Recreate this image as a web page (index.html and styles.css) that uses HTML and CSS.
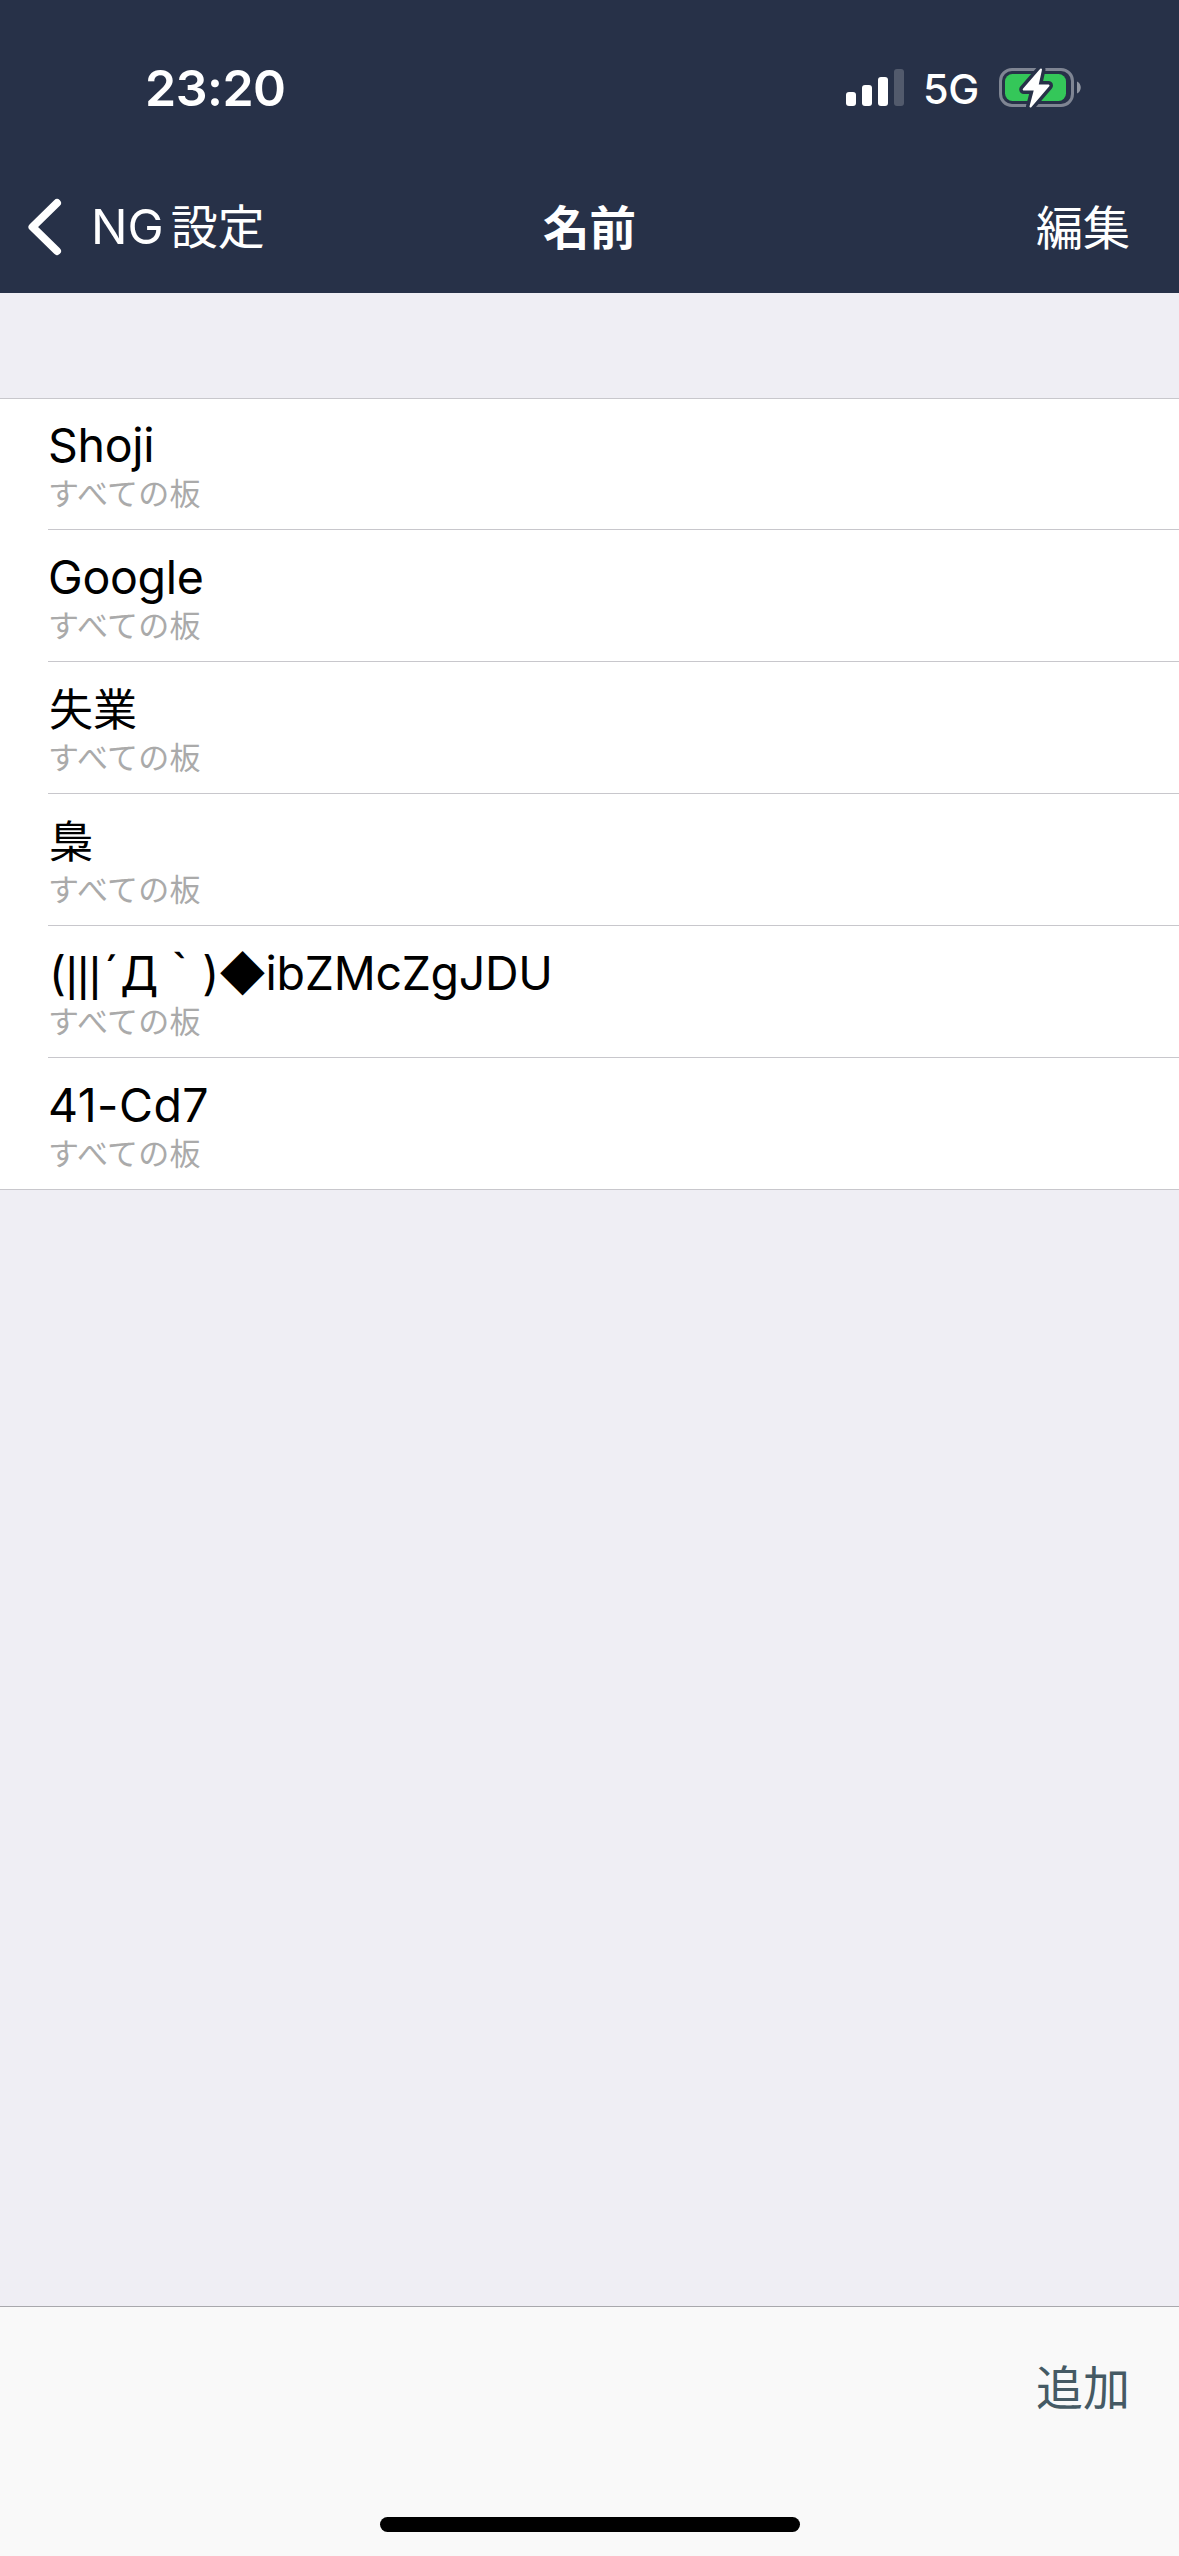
FILE: index.html
```html
<!DOCTYPE html>
<html lang="ja">
<head>
    <meta charset="UTF-8">
    <meta name="viewport" content="width=device-width, initial-scale=1.0">
    <title>名前</title>
    <link rel="stylesheet" href="styles.css">
</head>
<body>
    <header>
        <div class="status-bar">
            <div class="time">23:20</div>
            <div class="status-icons">
                <svg class="signal" width="58" height="37" viewBox="0 0 58 37" fill="#fff">
                    <rect x="0" y="23" width="10" height="14" rx="3"/>
                    <rect x="16" y="16" width="10" height="21" rx="3"/>
                    <rect x="32" y="8" width="10" height="29" rx="3"/>
                    <rect x="48" y="0" width="10" height="37" rx="3" opacity="0.2"/>
                </svg>
                <span class="network">5G</span>
                <svg class="battery" width="83" height="42" viewBox="0 0 83 42">
                    <rect x="1.5" y="2.5" width="72" height="36" rx="11.5" fill="none" stroke="#7f8593" stroke-width="3"/>
                    <path d="M78 14.5c5 2 5 10 0 12z" fill="#9196a2"/>
                    <rect x="6" y="7" width="61" height="27" rx="7.5" fill="#34c759"/>
                    <path class="bolt-edge" d="M42 2.5L24.7 22.5H36L31.5 39.5L49.5 18.5H38.5z"/>
                    <path class="bolt" d="M42 2.5L24.7 22.5H36L31.5 39.5L49.5 18.5H38.5z"/>
                </svg>
            </div>
        </div>
        <nav>
            <a class="back">
                <svg width="34" height="58" viewBox="0 0 34 58">
                    <path d="M29 5L4.5 29L29 53" fill="none" stroke="#fff" stroke-width="8" stroke-linecap="round" stroke-linejoin="round"/>
                </svg>
                <span class="back-label">NG<span class="kanji">設定</span></span>
            </a>
            <h1>名前</h1>
            <a class="edit">編集</a>
        </nav>
    </header>

    <main>
        <ul class="list">
            <li><div class="row"><p class="name">Shoji</p><p class="board">すべての板</p></div></li>
            <li><div class="row"><p class="name">Google</p><p class="board">すべての板</p></div></li>
            <li><div class="row"><p class="name ja">失業</p><p class="board">すべての板</p></div></li>
            <li><div class="row"><p class="name ja">梟</p><p class="board">すべての板</p></div></li>
            <li><div class="row"><p class="name face">(<span class="bars">|||</span><span class="acute">´</span>Д<span class="grave">｀</span>)<span class="diamond">◆</span><span>ibZMcZgJDU</span></p><p class="board">すべての板</p></div></li>
            <li><div class="row"><p class="name number">41-Cd7</p><p class="board">すべての板</p></div></li>
        </ul>
    </main>

    <footer>
        <a class="add">追加</a>
        <div class="home-indicator"></div>
    </footer>
</body>
</html>
```

FILE: styles.css
```css
* {
    box-sizing: border-box;
    margin: 0;
    padding: 0;
}

body {
    font-family: Inter, "Noto Sans CJK JP", sans-serif;
    display: flex;
    flex-direction: column;
    height: 2556px;
    background-color: #efeef4;
    color: #000;
}

/* header */
header {
    height: 293px;
    background-color: #273148;
    color: #fff;
}

.status-bar {
    display: flex;
    justify-content: space-between;
    height: 177px;
    padding: 57px 97px 0 145px;
}

.time {
    font-size: 50px;
    font-weight: 600;
    line-height: 62px;
    letter-spacing: -0.5px;
}

.status-icons {
    display: flex;
    align-items: flex-start;
}

.signal {
    margin-top: 12px;
}

.network {
    width: 95px;
    padding: 1px 0 0 19px;
    font-size: 41.5px;
    font-weight: 500;
    line-height: 62px;
    letter-spacing: -0.5px;
}

.battery {
    margin-top: 10px;
}

.bolt-edge {
    fill: #273148;
    stroke: #273148;
    stroke-width: 9;
    stroke-linejoin: round;
}

.bolt {
    fill: #fff;
    stroke: #fff;
    stroke-width: 2;
    stroke-linejoin: round;
}

nav {
    display: grid;
    grid-template-columns: 1fr auto 1fr;
    padding: 21px 49px 0 28px;
    font-size: 47px;
    line-height: 60px;
}

.back {
    display: flex;
    align-items: center;
    height: 58px;
}

.back-label {
    margin-left: 29px;
    font-size: 48.5px;
    white-space: nowrap;
}

.kanji {
    margin-left: 7px;
    font-size: 47px;
}

h1 {
    font-size: 46.5px;
    font-weight: 700;
    padding-left: 21px;
}

.edit {
    text-align: right;
}

/* list */
main {
    flex: 1;
    padding-top: 105px;
}

.list {
    list-style: none;
    background-color: #fff;
    border-top: 1px solid #c8c7cc;
    border-bottom: 1px solid #c8c7cc;
}

.list li {
    padding-left: 48px;
}

.row {
    height: 132px;
    padding-top: 19px;
    border-bottom: 1px solid #c8c7cc;
}

.list li:first-child .row {
    height: 131px;
    padding-top: 18px;
}

.list li:last-child .row {
    height: 131px;
    border-bottom: none;
}

.name {
    height: 56px;
    font-size: 46.5px;
    line-height: 56px;
    letter-spacing: -0.3px;
    white-space: nowrap;
}

.name.ja {
    padding: 1px 0 0 1px;
    font-size: 44px;
    letter-spacing: 0;
}

.name.number {
    letter-spacing: 0.5px;
}

/* kaomoji */
.face {
    padding-left: 1px;
}

.bars {
    font-family: "Liberation Sans", sans-serif;
    font-size: 46px;
    line-height: 0;
}

.acute {
    margin: 0 2px 0 3px;
}

.grave {
    margin: 0 -2px 0 0;
    line-height: 0;
    vertical-align: -6px;
}

.diamond {
    margin: 0 -1px 0 -1px;
}

.board {
    margin-top: 2px;
    font-size: 31px;
    line-height: 37px;
    letter-spacing: 0.2px;
    color: #aaa;
}

/* toolbar */
footer {
    display: flex;
    flex-direction: column;
    align-items: center;
    justify-content: space-between;
    height: 250px;
    padding: 51px 0 24px;
    background-color: #f9f9f9;
    border-top: 1px solid #a8a8ac;
}

.add {
    align-self: flex-end;
    margin-right: 49px;
    font-size: 47px;
    line-height: 60px;
    color: #455a64;
}

.home-indicator {
    width: 420px;
    height: 15px;
    border-radius: 8px;
    background-color: #000;
}
```
